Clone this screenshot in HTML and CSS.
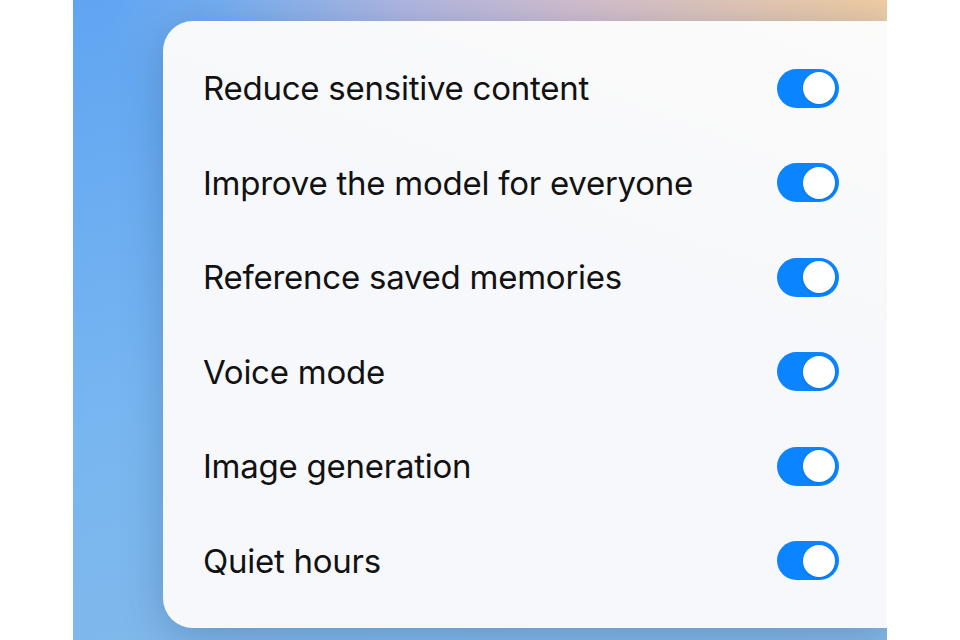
FILE: index.html
```html
<!DOCTYPE html>
<html lang="en">
<head>
    <meta charset="UTF-8">
    <title>Settings</title>
    <meta name="viewport" content="width=device-width, initial-scale=1.0">
    <link rel="stylesheet" href="styles.css">
</head>
<body>
<div class="backdrop">
    <div class="card">
        <div class="row">
            <span class="label">Reduce sensitive content</span>
            <span class="toggle on"><span class="knob"></span></span>
        </div>
        <div class="row">
            <span class="label">Improve the model for everyone</span>
            <span class="toggle on"><span class="knob"></span></span>
        </div>
        <div class="row">
            <span class="label">Reference saved memories</span>
            <span class="toggle on"><span class="knob"></span></span>
        </div>
        <div class="row">
            <span class="label">Voice mode</span>
            <span class="toggle on"><span class="knob"></span></span>
        </div>
        <div class="row">
            <span class="label">Image generation</span>
            <span class="toggle on"><span class="knob"></span></span>
        </div>
        <div class="row">
            <span class="label">Quiet hours</span>
            <span class="toggle on"><span class="knob"></span></span>
        </div>
    </div>
</div>
</body>
</html>
```
FILE: styles.css
```css
body {
    margin: 0;
    background: #fff;
    font-family: 'Inter', 'Noto Sans', sans-serif;
    color: #121212;
}
.backdrop {
    margin: 0 73px;
    height: 640px;
    padding-top: 21px;
    box-sizing: border-box;
    overflow: hidden;
    background:
        radial-gradient(ellipse 140% 85% at 100% 0%, #f0cda0 0%, rgba(214, 190, 205, 0.95) 28%, rgba(196, 186, 220, 0.8) 42%, rgba(180, 195, 228, 0.25) 58%, rgba(180, 195, 228, 0) 68%),
        linear-gradient(165deg, #60a5f2 0%, #78b6f1 50%, #86b9e6 100%);
}
.card {
    margin-left: 90px;
    height: 607px;
    box-sizing: border-box;
    padding: 20px 48px 20px 40px;
    background: linear-gradient(200deg, #fbfbfa 0%, #f7f8fb 40%, #f6f8fb 100%);
    border-radius: 30px 0 0 30px;
    box-shadow: 0 8px 40px rgba(25, 60, 110, 0.28);
    display: grid;
    grid-template-rows: repeat(6, 1fr);
}
.row {
    display: flex;
    align-items: center;
    justify-content: space-between;
}
.label {
    font-size: 33px;
    letter-spacing: -0.25px;
}
.toggle {
    width: 62px;
    height: 39px;
    border-radius: 20px;
    background: #0a84ff;
    display: flex;
    align-items: center;
    justify-content: flex-end;
    padding: 0 4px;
    box-sizing: border-box;
}
.knob {
    width: 32px;
    height: 32px;
    border-radius: 50%;
    background: #fff;
    box-shadow: 0 1px 3px rgba(0, 0, 0, 0.12);
}
```
